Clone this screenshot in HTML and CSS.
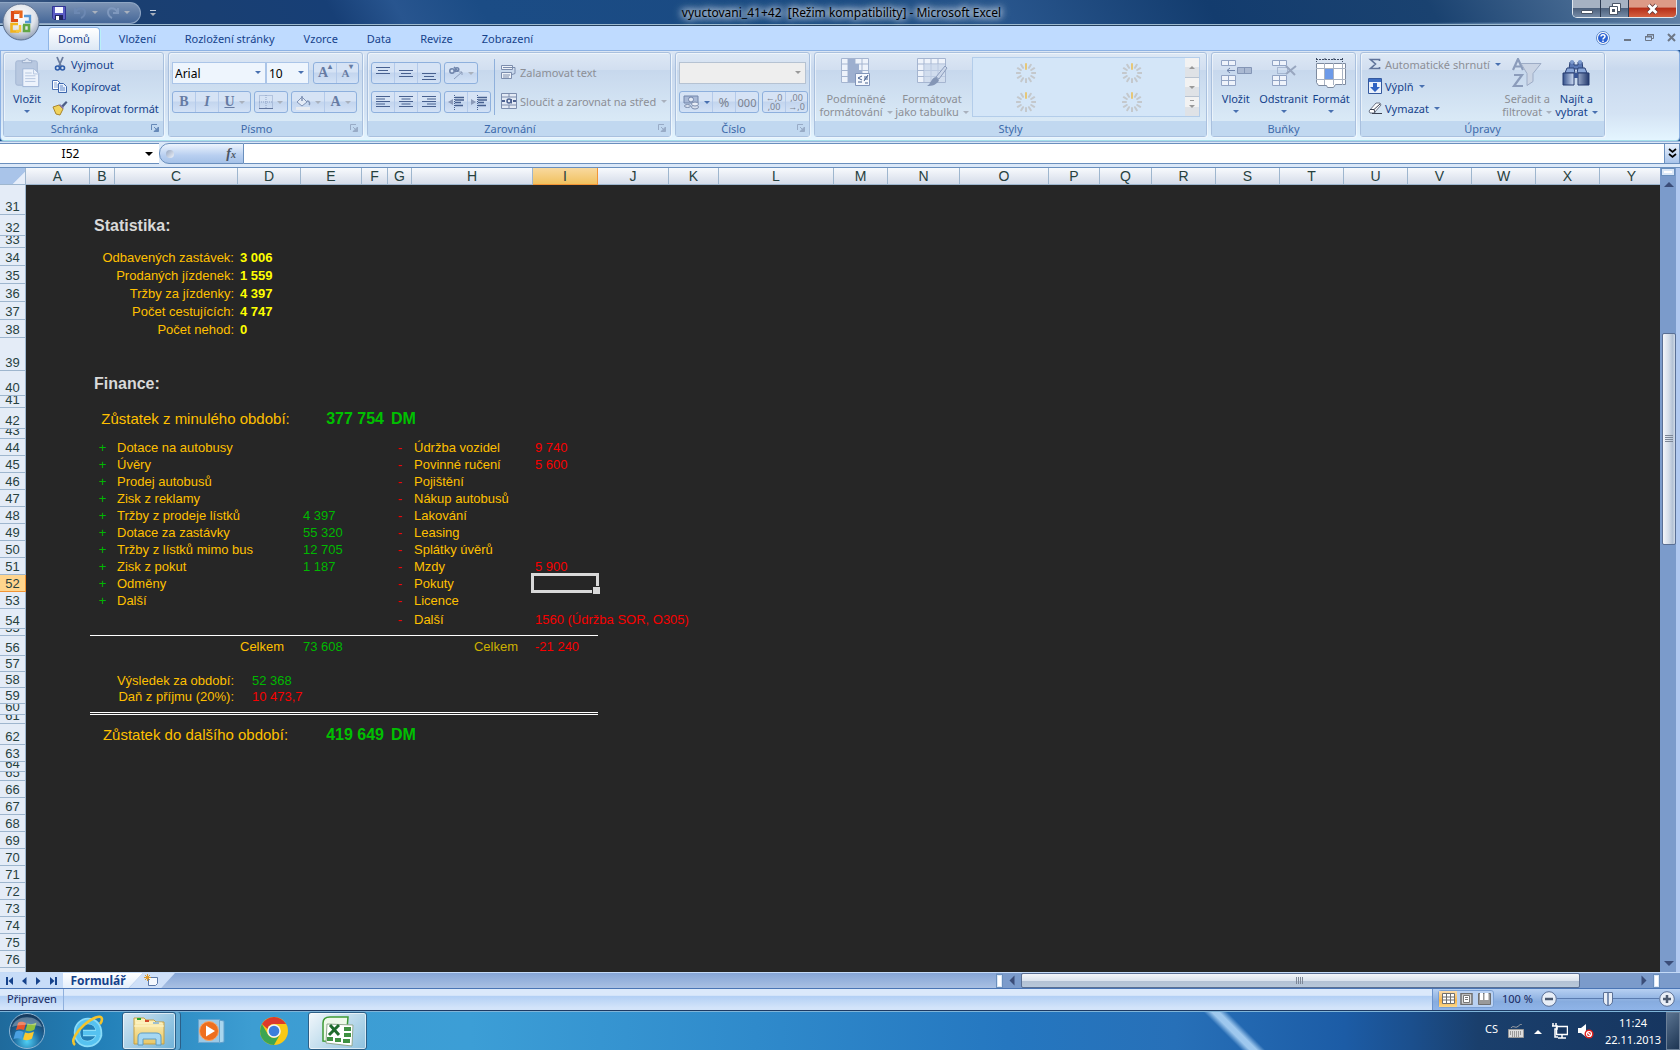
FILE: index.html
```html
<!DOCTYPE html>
<html lang="cs">

<head>
    <meta charset="UTF-8">
    <meta name="viewport" content="width=device-width, initial-scale=1.0">
    <title>vyuctovani_41+42 - Microsoft Excel</title>
    <link rel="stylesheet" href="styles.css">
</head>

<body>
    <!-- Shared icon shapes -->
    <svg class="defs" aria-hidden="true">
        <defs>
            <radialGradient id="orb" cx="50%" cy="35%" r="65%">
                <stop offset="0" stop-color="#ffffff" />
                <stop offset="0.6" stop-color="#dfe3ea" />
                <stop offset="1" stop-color="#8f9db3" />
            </radialGradient>
            <radialGradient id="startOrb" cx="50%" cy="80%" r="75%">
                <stop offset="0" stop-color="#4fd0f5" />
                <stop offset="0.5" stop-color="#1d6a9f" />
                <stop offset="1" stop-color="#173a5e" />
            </radialGradient>
            <linearGradient id="folder" x1="0" y1="0" x2="0" y2="1">
                <stop offset="0" stop-color="#fdf3c0" />
                <stop offset="1" stop-color="#e9c766" />
            </linearGradient>
            <linearGradient id="steel" x1="0" y1="0" x2="1" y2="0">
                <stop offset="0" stop-color="#34518c" />
                <stop offset="0.4" stop-color="#c9d8f0" />
                <stop offset="1" stop-color="#22386c" />
            </linearGradient>
            <symbol id="spinner" viewBox="0 0 20 20">
                <g stroke="#c4c8cc" stroke-width="2" stroke-linecap="round">
                    <path d="M13 4.8l1.8-3M15.2 7l3-1.8M16 10h3.500M15.2 13l3 1.800M13 15.200l1.800 3M10 16v3.500M7 15.200l-1.800 3M4.800 13l-3 1.800M4 10H.8M4.800 7l-3-1.800M7 4.800l-1.800-3" />
                    <path d="M10 1v5" stroke="#e6c778" />
                </g>
            </symbol>
            <symbol id="launcher" viewBox="0 0 8 8">
                <path d="M.5 6V.5H6" fill="none" stroke="currentColor" />
                <path d="M3 3l3 3M7.500 3v4.500H3z" stroke="currentColor" fill="currentColor" />
            </symbol>
        </defs>
    </svg>

    <div class="window">
        <!-- Title bar -->
        <header class="titlebar">
            <div class="quick">
                <button aria-label="Uložit">
                    <svg width="14" height="14" viewBox="0 0 14 14"><path d="M.5.5h13v13H2L.5 12z" fill="#5a5bc4" stroke="#2f3492" /><path d="M3 1h8v6H3z" fill="#f4f6ff" /><path d="M3 9h8v5H3z" fill="#20255c" /><path d="M4 10h3v4H4z" fill="#fff" /></svg>
                </button>
                <button aria-label="Zpět">
                    <svg width="13" height="13" viewBox="0 0 13 13"><path d="M1 2v5h5M1.500 6.500C4 1 11 1 11 6c0 3-2 5-4 6" fill="none" stroke="#6c88b2" stroke-width="2" /></svg>
                    <i class="arrow pale"></i>
                </button>
                <button aria-label="Znovu">
                    <svg width="13" height="13" viewBox="0 0 13 13"><path d="M12 2v5H7M11.500 6.500C9 1 2 1 2 6c0 3 2 5 4 6" fill="none" stroke="#7f98bd" stroke-width="2" /></svg>
                    <i class="arrow pale"></i>
                </button>
            </div>
            <button class="quick-more" aria-label="Přizpůsobit panel"><i class="arrow pale"></i></button>
            <h1>vyuctovani_41+42&nbsp; [Režim kompatibility] - Microsoft Excel</h1>
            <div class="win-buttons">
                <button aria-label="Minimalizovat"><svg width="12" height="12" viewBox="0 0 12 12"><path d="M.5 7.500h11v3H.5z" fill="#fff" stroke="#4a5566" /></svg></button>
                <button aria-label="Obnovit"><svg width="12" height="12" viewBox="0 0 12 12"><path d="M3.500.5h8v8h-8z" fill="#fff" stroke="#4a5566" /><path d="M.5 3.500h8v8h-8z" fill="#fff" stroke="#4a5566" /><path d="M3 6h3v3H3z" fill="#4a5566" /></svg></button>
                <button class="close" aria-label="Zavřít"><svg width="13" height="12" viewBox="0 0 13 12"><path d="M2.500 2l8 8m0-8l-8 8" stroke="#5b3030" stroke-width="4.500" /><path d="M2.500 2l8 8m0-8l-8 8" stroke="#fff" stroke-width="3" /></svg></button>
            </div>
        </header>

        <button class="office" aria-label="Tlačítko Office">
            <svg width="38" height="38" viewBox="0 0 38 38">
                <circle cx="19" cy="19" r="18" fill="url(#orb)" stroke="#5f7393" />
                <g fill="none" stroke-width="3.200">
                    <path d="M17 9.500h-6.500v8H16" stroke="#dc4a16" />
                    <path d="M12 9h7v6" stroke="#e8671c" />
                    <path d="M22 13h6v6h-5" stroke="#5698d6" stroke-width="2.400" />
                    <path d="M16 21h-6.500v7.500H17" stroke="#f2b31c" stroke-width="2.600" />
                    <path d="M18 22v6h-4" stroke="#f7c63a" stroke-width="2.400" />
                    <path d="M21 22h6v6h-5v-6" stroke="#62a644" stroke-width="2.600" />
                </g>
            </svg>
        </button>

        <!-- Ribbon tabs -->
        <nav class="tabs">
            <button class="tab active">Domů</button>
            <button class="tab">Vložení</button>
            <button class="tab">Rozložení stránky</button>
            <button class="tab">Vzorce</button>
            <button class="tab">Data</button>
            <button class="tab">Revize</button>
            <button class="tab">Zobrazení</button>
            <div class="doc-buttons">
                <button aria-label="Nápověda"><svg width="14" height="14" viewBox="0 0 14 14"><circle cx="7" cy="7" r="6.500" fill="#fff" stroke="#5b86c8" /><circle cx="7" cy="7" r="5" fill="#2c63d4" /><path d="M5 5.500c0-2.500 4-2.500 4 0C9 7 7 6.800 7 8.500M7 9.500V11" fill="none" stroke="#fff" stroke-width="1.500" /></svg></button>
                <button aria-label="Minimalizovat sešit"><svg width="9" height="9" viewBox="0 0 9 9"><path d="M1 6h7v2H1z" fill="#6d7786" /></svg></button>
                <button aria-label="Obnovit sešit"><svg width="9" height="9" viewBox="0 0 9 9"><path d="M2.500 3V1.500h6v4H7M.5 3.500h6v4h-6z" fill="none" stroke="#6d7786" /><path d="M2 1h7v1.500H2zM0 3h7v1.500H0z" fill="#6d7786" /></svg></button>
                <button aria-label="Zavřít sešit"><svg width="9" height="9" viewBox="0 0 9 9"><path d="M1 1l7 7M8 1L1 8" stroke="#6d7786" stroke-width="2" /></svg></button>
            </div>
        </nav>

        <!-- Ribbon -->
        <div class="ribbon">
            <section class="group clipboard">
                <div class="group-body">
                    <button class="big">
                        <svg width="28" height="32" viewBox="0 0 28 32"><rect x="2" y="3" width="23" height="26" rx="2" fill="#b8c8e0" stroke="#a3b5d2" /><path d="M9 5V2.500h3C12 0 16 0 16 2.500h3V5z" fill="#dce5f3" stroke="#98abc9" /><path d="M9.500 11.500h12l5 5v14h-17z" fill="#edf3fc" stroke="#9db2d4" /><path d="M21 12v5h5M12 16h7M12 19h11M12 22h11M12 25h11" fill="none" stroke="#b3c4df" /></svg>
                        <span>Vložit</span><i class="arrow"></i>
                    </button>
                    <div class="stack">
                        <button class="small"><svg width="16" height="16" viewBox="0 0 16 16"><path d="M5 1l4 9M11 1L7 10" stroke="#6a7c9e" stroke-width="1.800" /><circle cx="5.500" cy="12" r="2" fill="none" stroke="#2c5aa8" stroke-width="1.600" /><circle cx="10.500" cy="12" r="2" fill="none" stroke="#2c5aa8" stroke-width="1.600" /></svg>Vyjmout</button>
                        <button class="small"><svg width="16" height="16" viewBox="0 0 16 16"><path d="M.5 2.500h5l3 3v6h-8z" fill="#fff" stroke="#4d73b5" /><path d="M2 5h3M2 7h4M2 9h4" stroke="#7f9fd4" /><path d="M6.500 5.500h5l3 3v6h-8z" fill="#eaf2fd" stroke="#3d66ad" /><path d="M8 8h3M8 10h5M8 12h5" stroke="#5f86c8" /></svg>Kopírovat</button>
                        <button class="small"><svg width="16" height="16" viewBox="0 0 16 16"><path d="M9 6l5-5 1.500 1.500-4.500 5z" fill="#4c5e86" /><path d="M1 7l6-2 4 4-3 6-4-1z" fill="#f0d35d" stroke="#a9852c" /><path d="M7 5l4 4 1-1-4-4z" fill="#8a7bb0" /></svg>Kopírovat formát</button>
                    </div>
                </div>
                <h2>Schránka</h2><svg class="launch"><use href="#launcher" /></svg>
            </section>

            <section class="group font">
                <div class="group-body rows">
                    <div class="row">
                        <span class="combo font-name"><select aria-label="Písmo"><option>Arial</option></select></span>
                        <span class="combo font-size"><select aria-label="Velikost písma"><option>10</option></select></span>
                        <span class="set push">
                            <button class="serif wide">A<sup>▴</sup></button><button class="serif less wide">A<sup>▾</sup></button>
                        </span>
                    </div>
                    <div class="row">
                        <span class="set"><button class="serif"><b>B</b></button><button class="serif"><i>I</i></button><button class="serif wide"><u>U</u><i class="arrow pale"></i></button></span>
                        <span class="set"><button class="wide" aria-label="Ohraničení"><svg width="14" height="14" viewBox="0 0 14 14"><path d="M.5.5h13v13H.5zM7 0v14M0 7h14" fill="none" stroke="#8fa3c6" stroke-dasharray="1 1" /><path d="M0 13.500h14" stroke="#61769f" /></svg><i class="arrow pale"></i></button></span>
                        <span class="set"><button class="wide" aria-label="Barva výplně"><svg width="15" height="15" viewBox="0 0 15 15"><path d="M6 2l5 5-5 4-5-4z" fill="#e4ebf6" stroke="#8093b5" /><path d="M6 1v5M11 6c3 0 3 3 2 4" fill="none" stroke="#8093b5" stroke-width="1.500" /><path d="M0 12h14v3H0z" fill="#e7ebf1" /></svg><i class="arrow pale"></i></button><button class="serif wide">A<i class="arrow pale"></i></button></span>
                    </div>
                </div>
                <h2>Písmo</h2><svg class="launch off"><use href="#launcher" /></svg>
            </section>

            <section class="group align">
                <div class="group-body">
                    <div class="rows">
                        <div class="row">
                            <span class="set">
                                <button aria-label="Nahoru"><svg width="14" height="14" viewBox="0 0 14 14"><path d="M0 1.500h14M2 4.500h10M0 7.500h14" stroke="#47608f" /></svg></button>
                                <button aria-label="Na střed svisle"><svg width="14" height="14" viewBox="0 0 14 14"><path d="M0 4.500h14M2 7.500h10M0 10.500h14" stroke="#47608f" /></svg></button>
                                <button aria-label="Dolů"><svg width="14" height="14" viewBox="0 0 14 14"><path d="M0 7.500h14M2 10.500h10M0 13.500h14" stroke="#47608f" /></svg></button>
                            </span>
                            <span class="set"><button class="wide" aria-label="Orientace"><svg width="16" height="14" viewBox="0 0 16 14"><circle cx="4" cy="5" r="2.200" fill="none" stroke="#6f84ab" stroke-width="1.500" /><path d="M6 4l2 2M6 1l4 4" stroke="#6f84ab" stroke-width="1.500" /><circle cx="9" cy="3.500" r="1.800" fill="none" stroke="#6f84ab" stroke-width="1.500" /><path d="M6 13l8-7M11 6h3v3" fill="none" stroke="#8c9cba" /></svg><i class="arrow pale"></i></button></span>
                        </div>
                        <div class="row">
                            <span class="set">
                                <button aria-label="Vlevo"><svg width="14" height="12" viewBox="0 0 14 12"><path d="M0 .5h14M0 3h9M0 5.500h14M0 8h9M0 10.500h14" stroke="#47608f" /></svg></button>
                                <button aria-label="Na střed"><svg width="14" height="12" viewBox="0 0 14 12"><path d="M0 .5h14M2.500 3h9M0 5.500h14M2.500 8h9M0 10.500h14" stroke="#47608f" /></svg></button>
                                <button aria-label="Vpravo"><svg width="14" height="12" viewBox="0 0 14 12"><path d="M0 .5h14M5 3h9M0 5.500h14M5 8h9M0 10.500h14" stroke="#47608f" /></svg></button>
                            </span>
                            <span class="set">
                                <button aria-label="Zmenšit odsazení"><svg width="16" height="15" viewBox="0 0 16 15"><path d="M7 2.500h9M7 5h9M7 7.500h6M7 10.500h8" stroke="#47608f" stroke-width="1.500" /><path d="M6.500 0v15" stroke="#47608f" stroke-dasharray="1 1" /><path d="M5 4v6L0 7z" fill="#8b9ab8" /></svg></button>
                                <button aria-label="Zvětšit odsazení"><svg width="16" height="15" viewBox="0 0 16 15"><path d="M7 2.500h9M7 5h9M7 7.500h6M7 10.500h8" stroke="#47608f" stroke-width="1.500" /><path d="M6.500 0v15" stroke="#47608f" stroke-dasharray="1 1" /><path d="M0 4v6l5-3z" fill="#8b9ab8" /></svg></button>
                            </span>
                        </div>
                    </div>
                    <div class="rows text-rows">
                        <button class="small off"><svg width="16" height="16" viewBox="0 0 16 16"><path d="M.5 1.500h11v4H.5zM.5 8.500h10v6H.5z" fill="#eef2f8" stroke="#7c8dad" /><path d="M2 3.500h12v6l-3 1M2 11h7M2 13h6" fill="none" stroke="#7c8dad" /></svg>Zalamovat text</button>
                        <button class="small off"><svg width="16" height="16" viewBox="0 0 16 16"><path d="M.5.5h15v15H.5zM.5 4h15M.5 12h15M8 0v4M8 12v4" fill="#e3eaf5" stroke="#7c8dad" /><path d="M1 8h3M12 8h3" stroke="#4d6290" stroke-width="2" /><circle cx="8" cy="8" r="2" fill="none" stroke="#4d6290" stroke-width="1.500" /><path d="M10.500 6v4.500" stroke="#4d6290" /></svg>Sloučit a zarovnat na střed<i class="arrow pale"></i></button>
                    </div>
                </div>
                <h2>Zarovnání</h2><svg class="launch off"><use href="#launcher" /></svg>
            </section>

            <section class="group number">
                <div class="group-body rows">
                    <div class="row"><span class="combo disabled"><select aria-label="Formát čísla" disabled><option></option></select></span></div>
                    <div class="row">
                        <span class="set grow"><button class="wide" aria-label="Měna"><svg width="17" height="15" viewBox="0 0 17 15"><path d="M1 1h14v7H1z" fill="#a9b9d6" stroke="#7386ab" /><circle cx="8" cy="4.500" r="2.500" fill="#e2e9f5" stroke="#7386ab" /><ellipse cx="12" cy="12" rx="3.500" ry="2" fill="#d8e0ee" stroke="#7c8dad" /><ellipse cx="12" cy="9" rx="3.500" ry="2" fill="#e9eef7" stroke="#7c8dad" /><ellipse cx="4.500" cy="11" rx="3" ry="1.500" fill="#d8e0ee" stroke="#7c8dad" /></svg><i class="arrow"></i></button><button class="percent">%</button><button>000</button></span>
                        <span class="set">
                            <button class="decimals"><span>←,0</span><span>,00</span></button><button class="decimals"><span>,00</span><span>→,0</span></button>
                        </span>
                    </div>
                </div>
                <h2>Číslo</h2><svg class="launch off"><use href="#launcher" /></svg>
            </section>

            <section class="group styles">
                <div class="group-body">
                    <button class="big off">
                        <svg width="32" height="30" viewBox="0 0 32 30"><path d="M1.500.5h27v24h-27zM1.500 6h27M1.500 12.500h27M1.500 18.500h27M8 0v25M15 0v25M22 0v25" fill="#eef3fb" stroke="#a5b5d0" /><path d="M8 1h7v5h-7zM8 6h11v6H8zM8 12h14v6H8zM8 18h7v6H8z" fill="#9dafcf" /><path d="M15.500 15.500h14v12h-14z" fill="#f5f8fd" stroke="#8195ba" /><path d="M22 18l-4 2 4 2M18 24h4M24 19h4M24 21h4M28 17l-4 6M25 25h3" fill="none" stroke="#47608f" /></svg>
                        <span>Podmíněné<br>formátování<i class="arrow pale"></i></span>
                    </button>
                    <button class="big off">
                        <svg width="32" height="30" viewBox="0 0 32 30"><path d="M1.500.5h28v24h-28zM1.500 6h28M1.500 12.500h28M1.500 18.500h28M8 0v25M15 0v25M22 0v25" fill="#eef3fb" stroke="#a5b5d0" /><path d="M8 6h21v18H8z" fill="#c5d3e8" opacity=".7" /><path d="M29 8l2 2-8 11-3-2z" fill="#cbd7ea" stroke="#8c9dbd" /><path d="M20 19l3 3c-2 5-7 6-12 6 4-2 4-8 9-9z" fill="#8496b6" /></svg>
                        <span>Formátovat<br>jako tabulku<i class="arrow pale"></i></span>
                    </button>
                    <div class="gallery">
                        <div class="gallery-items">
                            <svg><use href="#spinner" /></svg><svg><use href="#spinner" /></svg>
                            <svg><use href="#spinner" /></svg><svg><use href="#spinner" /></svg>
                        </div>
                        <div class="gallery-scroll">
                            <button aria-label="Předchozí"><i class="arrow up grey"></i></button>
                            <button aria-label="Další styly"><i class="arrow grey"></i></button>
                            <button class="more" aria-label="Více"><i class="arrow grey"></i></button>
                        </div>
                    </div>
                </div>
                <h2>Styly</h2>
            </section>

            <section class="group cells">
                <div class="group-body">
                    <button class="big"><svg width="32" height="28" viewBox="0 0 32 28"><path d="M1.500 1.500h14v5h-14zM8.500 1.500v5M1.500 16.500h14v10h-14zM8.500 16.500v10M1.500 21.500h14" fill="#eef3fb" stroke="#92a4c4" /><path d="M17.500 8.500h14v6h-14zM24.500 8.500v6" fill="#aab9d2" stroke="#8496b6" /><path d="M15 11.500H7M10 9l-3 2.500 3 2.500" fill="none" stroke="#6f84ab" /></svg><span>Vložit</span><i class="arrow"></i></button>
                    <button class="big"><svg width="32" height="28" viewBox="0 0 32 28"><path d="M4.500 1.500h14v5h-14zM11.500 1.500v5M4.500 16.500h14v10h-14zM11.500 16.500v10M4.500 21.500h14" fill="#eef3fb" stroke="#92a4c4" /><path d="M9.500 8.500h10v6h-10z" fill="none" stroke="#8093b5" stroke-dasharray="1 1" /><path d="M18 7l9 9M28 7l-10 8" stroke="#98a6bf" stroke-width="2" /></svg><span>Odstranit</span><i class="arrow"></i></button>
                    <button class="big"><svg width="32" height="30" viewBox="0 0 32 30"><path d="M1.500 0v4M27.500 0v4M10 0v3M19 0v3M1 1.500h27" stroke="#3d4a62" stroke-dasharray="2 1" fill="none" /><path d="M1.500 5.500h29v21h-10l-2 3h-6l-1-2H3.500l-2-3z" fill="#fff" stroke="#7d8a9f" /><path d="M1 10.500h30M1 21.500h30M9.500 5v22M18.500 5v22M27.500 5v22" stroke="#a8b2c2" /><path d="M10 11h8v10h-8z" fill="#6d9ae8" /></svg><span>Formát</span><i class="arrow"></i></button>
                </div>
                <h2>Buňky</h2>
            </section>

            <section class="group editing">
                <div class="group-body">
                    <div class="stack">
                        <button class="small off"><svg width="14" height="16" viewBox="0 0 14 16"><path d="M11.500 5V3.500h-9l5 4.500-5 4.500h9V11" fill="none" stroke="#5f739a" stroke-width="1.600" /></svg>Automatické shrnutí<i class="arrow"></i></button>
                        <button class="small"><svg width="14" height="16" viewBox="0 0 14 16"><path d="M.5.5h13v15H.5z" fill="#eaf1fc" stroke="#34599e" /><path d="M1 1h12v3H1z" fill="#3f6fc4" /><path d="M5 5h4v4h3l-5 5-5-5h3z" fill="#2f62c2" /></svg>Výplň<i class="arrow"></i></button>
                        <button class="small"><svg width="14" height="16" viewBox="0 0 14 16"><path d="M1 11l7-8h4l1 2-7 8H2z" fill="#fff" stroke="#6c7486" /><path d="M2 9.500h4l1 3M6 9.500L12 4M4 13.500h10" fill="none" stroke="#394050" /></svg>Vymazat<i class="arrow"></i></button>
                    </div>
                    <button class="big off">
                        <svg width="32" height="30" viewBox="0 0 32 30"><path d="M2 12L7 1l5 11M4 8.500h6M3 17h8L3 28h9" fill="none" stroke="#8b9cbb" stroke-width="2.200" /><path d="M10 5.500h20l-8 10v8l-6 4v-12z" fill="#cad4e4" stroke="#9dacc6" /></svg>
                        <span>Seřadit a<br>filtrovat<i class="arrow pale"></i></span>
                    </button>
                    <button class="big">
                        <svg width="28" height="28" viewBox="0 0 28 28"><path d="M8 3h4v3h4V3h4l1 7H7z" fill="#5a78b4" stroke="#2b4276" /><path d="M5 9h7l1 5H3zM16 9h7l2 5H15z" fill="#89a6d8" stroke="#2b4276" /><path d="M1 14h11v12H1zM16 14h11v12H16z" fill="url(#steel)" stroke="#263c70" /><path d="M12 14h4v5h-4z" fill="#3a5694" /><circle cx="10" cy="3" r="2" fill="#7d9acd" /><circle cx="18" cy="3" r="2" fill="#7d9acd" /></svg>
                        <span>Najít a<br>vybrat<i class="arrow"></i></span>
                    </button>
                </div>
                <h2>Úpravy</h2>
            </section>
        </div>

        <!-- Formula bar -->
        <div class="formula-bar">
            <div class="name-box"><input type="text" value="I52" aria-label="Pole názvů"><i class="arrow black"></i></div>
            <div class="fx"><i class="dot"></i><button aria-label="Vložit funkci"><em>f<sub>x</sub></em></button></div>
            <input class="formula" type="text" aria-label="Řádek vzorců">
            <button class="expand" aria-label="Rozbalit"><svg width="9" height="11" viewBox="0 0 9 11"><path d="M1 1l3.500 3L8 1M1 6l3.500 3L8 6" fill="none" stroke="#000" stroke-width="1.700" /></svg></button>
        </div>

        <!-- Sheet -->
        <main class="sheet">
            <div class="viewport">
                <table id="grid"></table>
            </div>
            <div class="vscroll">
                <i class="split"></i>
                <div class="vtrack">
                    <i class="arrow up navy"></i>
                    <div class="vthumb"><i class="grip"></i></div>
                    <i class="arrow navy"></i>
                </div>
            </div>
        </main>

        <!-- Sheet tabs -->
        <div class="sheet-bar">
            <div class="sheet-nav">
                <button aria-label="První list"><svg width="7" height="8" viewBox="0 0 7 8"><path d="M0 0h2v8H0zM7 0v8L2.500 4z" fill="#16428b" /></svg></button>
                <button aria-label="Předchozí list"><svg width="7" height="8" viewBox="0 0 7 8"><path d="M5.500 0v8L1 4z" fill="#16428b" /></svg></button>
                <button aria-label="Následující list"><svg width="7" height="8" viewBox="0 0 7 8"><path d="M1 0v8l4.500-4z" fill="#16428b" /></svg></button>
                <button aria-label="Poslední list"><svg width="7" height="8" viewBox="0 0 7 8"><path d="M5 0h2v8H5zM0 0v8l4.500-4z" fill="#16428b" /></svg></button>
            </div>
            <button class="sheet-tab">Formulář</button>
            <button class="new-sheet" aria-label="Vložit list"><svg width="14" height="13" viewBox="0 0 14 13"><path d="M4.500 3.500h9v6l-2 2h-7z" fill="#f3f7fd" stroke="#5c79a8" /><path d="M3.500 0v7M0 3.500h7M1 1l5 5M6 1L1 6" stroke="#dc9a2c" /></svg></button>
            <div class="hscroll">
                <i class="hsplit"></i>
                <i class="arrow left navy"></i>
                <div class="htrack"><div class="hthumb"><i class="grip side"></i></div></div>
                <i class="arrow right navy"></i>
                <i class="hsplit"></i>
            </div>
        </div>

        <!-- Status bar -->
        <footer class="status">
            <span class="ready">Připraven</span>
            <div class="status-right">
                <div class="views">
                    <button class="on" aria-label="Normálně"><svg width="13" height="11" viewBox="0 0 13 11"><path d="M.5.5h12v10H.5zM0 4h13M0 7h13M4.500 0v11M8.500 0v11" fill="#fff" stroke="#6f6f6f" /></svg></button>
                    <button aria-label="Rozložení stránky"><svg width="13" height="12" viewBox="0 0 13 12"><path d="M1 .5h11v11H1z" fill="#d5d5d5" stroke="#6f6f6f" stroke-width="1.500" /><path d="M3.500 2.500h6v7h-6zM5 4.500h3M5 6.500h3" fill="#fff" stroke="#777" /></svg></button>
                    <button aria-label="Konce stránek"><svg width="13" height="12" viewBox="0 0 13 12"><path d="M.5.5h12v11H.5z" fill="#999" stroke="#6f6f6f" /><path d="M2 0h3v7H2zM6.500 0h4v7h-4z" fill="#fff" /></svg></button>
                </div>
                <label for="zoom">100 %</label>
                <button class="round" aria-label="Oddálit"><svg width="16" height="16" viewBox="0 0 16 16"><circle cx="8" cy="8" r="7.300" fill="#e8eef7" stroke="#5b7096" /><path d="M4 8h8" stroke="#4c5a70" stroke-width="2.500" /></svg></button>
                <input id="zoom" type="range" min="0" max="100" value="50">
                <button class="round" aria-label="Přiblížit"><svg width="16" height="16" viewBox="0 0 16 16"><circle cx="8" cy="8" r="7.300" fill="#e8eef7" stroke="#5b7096" /><path d="M4 8h8M8 4v8" stroke="#4c5a70" stroke-width="2.500" /></svg></button>
            </div>
        </footer>
    </div>

    <!-- Windows taskbar -->
    <div class="taskbar">
        <button class="task start" aria-label="Start"><svg width="38" height="38" viewBox="0 0 38 38"><circle cx="19" cy="19" r="17.500" fill="url(#startOrb)" stroke="#8fb6d4" /><path d="M10 11c3-2 5-1 8 0l-2 7c-3-1-5-1-8 0z" fill="#e8552c" /><path d="M19.500 11.500c3 1 5 1 9-1l-2 7c-3 2-6 2-9 1z" fill="#8fc13e" /><path d="M7.500 20c3-2 5-1 8 0l-2 7c-3-1-5-1-8 0z" fill="#4aa0e2" /><path d="M17 20.500c3 1 5 1 9-1l-2 7c-3 2-6 2-9 1z" fill="#fbc92f" /><path d="M4 15C8 2 30 2 34 15c-8-3-22-3-30 0z" fill="#fff" opacity=".3" /></svg></button>
        <button class="task" aria-label="Internet Explorer"><svg width="34" height="34" viewBox="0 0 34 34"><path d="M28 21c-1 5-6 9-11.500 9C10 30 6 25 6 18.500 6 12 11 7 17 7c7 0 11 5 11 12H12" fill="none" stroke="#8adcf8" stroke-width="6.500" /><path d="M27.500 21c-1 5-5.500 8.500-11 8.500-6 0-10-4.500-10-11C6.500 12 11 7.500 17 7.500c6.500 0 10.500 5 10.500 11.500H12" fill="none" stroke="#56c2f0" stroke-width="4" /><path d="M4 31c-5-4 2-14 9-20C21 4 30 0 31 5c0 2-1 4-2 5" fill="none" stroke="#f4c42c" stroke-width="2.600" /></svg></button>
        <button class="task open stacked" aria-label="Průzkumník"><svg width="34" height="32" viewBox="0 0 34 32"><path d="M2 5V3h10l2 2h8l2 2h8v22H2z" fill="url(#folder)" stroke="#c59f42" /><path d="M5 3h4v2H5z" fill="#28a428" /><path d="M13 5h4v2h-4z" fill="#d24a2a" /><path d="M21 7h6v2h-6z" fill="#3f8ad2" /><path d="M2 11h30M4 8h26" stroke="#fff6cc" /><path d="M6 30V22c0-3 2-4 4-4h14c3 0 5 1 5 4v8h-5v-6H11v6z" fill="#a5d7f2" stroke="#5c9cc4" /></svg></button>
        <button class="task" aria-label="Media Player"><svg width="30" height="28" viewBox="0 0 30 28"><path d="M22 3l5 1v21l-5 1z" fill="#a9d6ee" stroke="#5fa0cc" /><path d="M1.500 2.500h21v23h-21z" fill="#9cc9e6" stroke="#6aa6cf" /><circle cx="12" cy="14" r="9.500" fill="#ee6f1e" stroke="#f7a567" /><path d="M9 8.500v11l9-5.500z" fill="#fff" /></svg></button>
        <button class="task" aria-label="Chrome"><svg width="30" height="30" viewBox="0 0 30 30"><circle cx="15" cy="15" r="14" fill="#f9c916" /><path d="M2.900 8A14 14 0 0 1 27.100 8H15a7 7 0 0 0-6.500 5z" fill="#dc3a2b" /><path d="M2.900 8A14 14 0 0 0 15 29l6-10.500a7 7 0 0 1-12 0z" fill="#3ca552" /><circle cx="15" cy="15" r="6.800" fill="#f5f5f5" /><circle cx="15" cy="15" r="5.300" fill="#3b7ddb" /></svg></button>
        <button class="task open excel" aria-label="Excel"><svg width="32" height="31" viewBox="0 0 32 31"><path d="M1 7q0-6 7-6h18l-2 25-23-1z" fill="#eef8ea" stroke="#3e9a35" stroke-width="1.500" /><path d="M5 8l26 1-1 21-26-3z" fill="#fff" stroke="#91a98f" /><path d="M22 11h7v4h-7zM22 17h7v4h-7zM21 23h7v4h-7zM13 22h6v4h-6zM5 21h6v4H5z" fill="#3f9142" /><path d="M8 9l9 10M17 9L7 19" stroke="#1f6b2c" stroke-width="3" /></svg></button>
        <div class="tray">
            <div class="tray-icons">
                <span class="lang">CS</span>
                <svg width="16" height="14" viewBox="0 0 16 14"><path d="M.5 5.500h15v8H.5z" fill="#ddd" stroke="#999" /><path d="M2 8h12M2 10h12M4 12h8" stroke="#555" stroke-dasharray="1 1" /><path d="M3 4c2-3 4 0 6-1s3-3 5-3" fill="none" stroke="#aaa" /></svg>
                <svg width="8" height="5" viewBox="0 0 8 5"><path d="M0 5l4-4 4 4z" fill="#fff" /></svg>
                <svg width="16" height="16" viewBox="0 0 16 16"><path d="M4.500 3.500h11v8h-11z" fill="#17365f" stroke="#fff" stroke-width="1.500" /><path d="M6 15h8M10 12v3M0 3h5v3H3v8h3M1 0v3M4 0v3" fill="none" stroke="#fff" stroke-width="1.500" /></svg>
                <svg width="16" height="16" viewBox="0 0 16 16"><path d="M0 5h3l5-4v13l-5-4H0z" fill="#fff" /><circle cx="11" cy="11" r="4.500" fill="#e2201c" /><circle cx="11" cy="11" r="2.500" fill="none" stroke="#fff" stroke-width="1.200" /><path d="M9 9l4 4" stroke="#fff" stroke-width="1.200" /></svg>
            </div>
            <div class="clock"><span>11:24</span><span>22.11.2013</span></div>
            <button class="desktop" aria-label="Zobrazit plochu"></button>
        </div>
    </div>

    <script src="script.js"></script>
</body>

</html>
```

FILE: styles.css
```css
/* Global Styles */
* {
    box-sizing: border-box;
}

body {
    margin: 0;
    height: 100vh;
    display: flex;
    flex-direction: column;
    overflow: hidden;
    background-color: #1c4f8c;
    font-family: "Noto Sans", "Open Sans", sans-serif;
    font-size: 11px;
    color: #15428b;
}

button,
input,
select {
    margin: 0;
    padding: 0;
    border: none;
    background: none;
    font: inherit;
    color: inherit;
}

h1,
h2 {
    margin: 0;
    font-weight: normal;
}

.defs {
    position: absolute;
    width: 0;
    height: 0;
}

.window {
    flex: 1;
    min-height: 0;
    display: flex;
    flex-direction: column;
    position: relative;
}

/* Little triangles */
.arrow {
    display: inline-block;
    flex: none;
    border: 3px solid transparent;
    border-top-color: #4870b0;
    border-bottom-width: 0;
}

.arrow.pale {
    border-top-color: #a9b1bd;
}

.arrow.grey {
    border-top-color: #999;
}

.arrow.black {
    border-width: 4px 4px 0;
    border-top-color: #000;
}

.arrow.navy {
    border-width: 5px 5px 0;
    border-top-color: #3b4d78;
}

.arrow.up {
    transform: rotate(180deg);
}

.arrow.left {
    transform: rotate(90deg);
}

.arrow.right {
    transform: rotate(-90deg);
}

/* Title bar */
.titlebar {
    height: 26px;
    display: grid;
    grid-template-columns: auto 1fr auto 1fr;
    align-items: center;
    background: radial-gradient(ellipse at 92% 100%, rgba(160, 195, 225, 0.8), transparent 9%), linear-gradient(60deg, #4b658c 0, #1b3f70 6%, #173f76 20%, #28558f 24%, #1b4c85 29%, #1a4a82 50%, #28558c 60%, #133c6e 72%, #1a4270 85%, #6383a8 100%);
    border-bottom: 1px solid #24405f;
    box-shadow: inset 0 -1px #9dbad0;
}

.quick {
    height: 22px;
    width: 141px;
    padding-left: 52px;
    display: flex;
    align-items: center;
    gap: 8px;
    background: linear-gradient(#7c93b4, #456798);
    border: 1px solid #8fa6c4;
    border-left: none;
    border-radius: 0 12px 12px 0;
}

.quick button {
    display: flex;
    align-items: center;
    gap: 5px;
}

.quick-more {
    justify-self: start;
    margin-left: 9px;
    display: flex;
    border-top: 1px solid #c3cfdf;
    padding-top: 2px;
}

.titlebar h1 {
    padding: 0 8px;
    margin-right: 138px;
    font-size: 12px;
    line-height: 18px;
    color: #000;
    white-space: nowrap;
    text-shadow: 0 0 6px #fff, 0 0 8px #fff, 0 0 12px #cde;
}

.win-buttons {
    justify-self: end;
    align-self: start;
    display: flex;
    height: 18px;
    margin-right: 3px;
    border: 1px solid #e0e8f0;
    border-top: none;
    border-radius: 0 0 5px 5px;
    overflow: hidden;
}

.win-buttons button {
    width: 28px;
    display: flex;
    align-items: center;
    justify-content: center;
    background: linear-gradient(#a6b2c3 45%, #4d617d 50%, #768ba6);
    border-right: 1px solid #2b3950;
}

.win-buttons .close {
    width: 47px;
    background: linear-gradient(#dd9a87 40%, #b7301a 50%, #d4603f);
    border-right: none;
}

.office {
    position: absolute;
    left: 2px;
    top: 3px;
    z-index: 2;
    height: 38px;
    border-radius: 50%;
}

/* Ribbon tabs */
.tabs {
    height: 24px;
    padding: 1px 4px 0 48px;
    display: flex;
    gap: 9px;
    background-color: #bfdbff;
}

.tab {
    height: 23px;
    padding: 0 9px 2px;
    border: 1px solid transparent;
    border-bottom: none;
    border-radius: 4px 4px 0 0;
}

.tab.active {
    background: linear-gradient(#fff, #dde8f5);
    border-color: #8fb5e6;
    box-shadow: 1px 0 #b9f0f8;
}

.doc-buttons {
    margin-left: auto;
    padding-bottom: 2px;
    display: flex;
    align-items: center;
    gap: 13px;
}

.doc-buttons button {
    display: flex;
}

/* Ribbon */
.ribbon {
    height: 91px;
    padding: 1px 2px 4px;
    display: flex;
    gap: 4px;
    background: linear-gradient(#dbe6f4, #c9d9ee 20%, #d4e3f4 70%, #e4f5ff);
    border: 1px solid #8db2e3;
    border-bottom-color: #a5dfe9;
    border-radius: 0 4px 4px 4px;
}

.group {
    position: relative;
    height: 85px;
    display: flex;
    flex-direction: column;
    flex: none;
    border: 1px solid #a9c0de;
    border-radius: 3px;
    background: linear-gradient(#dde8f5, #d2dff0 20%, #c7d8ed 21%, #d9e9f6 80%);
    box-shadow: inset 1px 1px rgba(255, 255, 255, 0.5), 1px 1px #eef6fd;
}

.group h2 {
    height: 15px;
    font-size: 11px;
    line-height: 15px;
    text-align: center;
    color: #3e6aaa;
    background-color: #c1d8f0;
}

/* groups with a dialog launcher in the corner */
.clipboard h2,
.font h2,
.align h2,
.number h2 {
    padding-right: 18px;
}

.group-body {
    flex: 1;
    min-height: 0;
    padding: 0 3px;
    display: flex;
}

.clipboard { width: 161px; }
.font { width: 195px; }
.align { width: 304px; }
.number { width: 135px; }
.styles { width: 393px; }
.cells { width: 145px; }
.editing { width: 245px; }

.clipboard .group-body,
.cells .group-body {
    padding: 0;
}

.launch {
    position: absolute;
    right: 4px;
    bottom: 4px;
    width: 8px;
    height: 8px;
    color: #6689b8;
}

.launch.off {
    color: #98abc6;
}

.big {
    min-width: 46px;
    padding-top: 5px;
    display: flex;
    flex-direction: column;
    align-items: center;
    line-height: 13px;
    white-space: nowrap;
}

.big svg {
    height: 30px;
    margin-bottom: 4px;
}

.big > .arrow {
    margin-top: 5px;
}

.big span .arrow {
    margin: 0 0 2px 4px;
}

.off {
    color: #8c8f96;
}

.stack {
    padding-left: 2px;
    display: flex;
    flex-direction: column;
}

.small {
    height: 22px;
    display: flex;
    align-items: center;
    gap: 3px;
    white-space: nowrap;
}

.small .arrow {
    margin-left: 2px;
}

.rows {
    display: flex;
    flex-direction: column;
    gap: 7px;
    padding-top: 9px;
}

.row {
    display: flex;
    gap: 3px;
}

.set {
    height: 22px;
    display: flex;
    border: 1px solid #8eb0dd;
    border-radius: 3px;
    background: linear-gradient(#d6e3f5 45%, #c3d5ee 50%, #d3e2f6);
}

.set button {
    width: 23px;
    display: flex;
    align-items: center;
    justify-content: center;
    color: #7a8290;
    border-left: 1px solid #b4caea;
}

.set button:first-child {
    border-left: none;
    width: 22px;
}

.set .wide,
.set .wide:first-child {
    width: 32px;
    gap: 4px;
}

.set .serif {
    font-family: "Liberation Serif", serif;
    font-size: 14px;
    font-weight: bold;
    color: #667ba3;
}

.push .wide,
.push .wide:first-child {
    width: 22px;
    gap: 0;
}

.set .less {
    font-size: 11px;
}

.set sup {
    font-size: 8px;
    line-height: 8px;
    align-self: flex-start;
}

.push {
    margin-left: 1px;
}

.percent {
    font-size: 13px;
}

.set .decimals {
    flex-direction: column;
    font-size: 9px;
    line-height: 9px;
    width: 22px;
}

.grow {
    flex: 1;
}

.grow button:last-child {
    flex: 1;
}

/* Drop-down boxes */
.combo {
    position: relative;
    height: 22px;
    flex: 1;
    background-color: #eef5fd;
    border: 1px solid #abc5e8;
}

.combo select {
    width: 100%;
    height: 20px;
    padding-left: 2px;
    appearance: none;
    font-size: 12px;
    color: #000;
}

.combo::after {
    content: "";
    position: absolute;
    right: 4px;
    top: 8px;
    border: 3px solid transparent;
    border-top-color: #4870b0;
    border-bottom-width: 0;
    pointer-events: none;
}

.combo.font-size {
    flex: 0 0 43px;
    margin-left: -3px;
}

.combo.disabled {
    background-color: #eee;
    border-color: #b5c2d2;
}

.combo.disabled::after {
    border-top-color: #999;
}

.text-rows {
    flex: 1;
    margin: 6px 0 6px 3px;
    padding: 2px 0 0 6px;
    border-left: 1px solid #8fb0db;
}

/* Style gallery */
.styles .big {
    width: 76px;
}

.gallery {
    flex: 1;
    margin: 4px 3px 4px 2px;
    display: flex;
    border: 1px solid #b3cdea;
    background-color: #d4e6f8;
}

.gallery-items {
    flex: 1;
    display: grid;
    grid-template-columns: 1fr 1fr;
    place-items: center;
}

.gallery-items svg {
    width: 20px;
    height: 20px;
}

.gallery-scroll {
    width: 14px;
    display: flex;
    flex-direction: column;
    gap: 1px;
    background-color: #b9c3d0;
}

.gallery-scroll button {
    flex: 1;
    display: flex;
    align-items: center;
    justify-content: center;
    background: linear-gradient(#f2f2f2 50%, #dfe2e6 50%);
}

.gallery-scroll .more .arrow {
    box-shadow: 0 -6px 0 -1px #999;
}

.cells .big {
    width: 48px;
}

.editing .stack {
    width: 141px;
    padding-left: 4px;
}

.editing .big {
    width: 50px;
}

/* Formula bar */
.formula-bar {
    height: 26px;
    padding: 1px 0 4px;
    display: flex;
    background-color: #dbe8f8;
    border-top: 1px solid #9ab6dc;
    color: #000;
}

.formula-bar > * {
    height: 21px;
    border-top: 1px solid #6a8fbd;
    border-bottom: 1px solid #6a8fbd;
}

.name-box {
    width: 159px;
    padding-right: 6px;
    display: flex;
    align-items: center;
    background-color: #fff;
}

.name-box input {
    flex: 1;
    min-width: 0;
    padding-right: 4px;
    font-size: 12px;
    text-align: center;
}

.fx {
    width: 85px;
    padding: 0 7px 0 6px;
    display: flex;
    align-items: center;
    justify-content: space-between;
    background: linear-gradient(#edf4fd, #b8cff0 60%, #a6c2e8);
    border-left: 1px solid #6a8fbd;
    border-right: 1px solid #6a8fbd;
    border-radius: 10px 0 0 10px;
}

.dot {
    width: 8px;
    height: 8px;
    border-radius: 50%;
    background: linear-gradient(135deg, #95a5c0, #f0f4fa);
}

.fx em {
    font-family: "Liberation Serif", serif;
    font-size: 14px;
    font-weight: bold;
    line-height: 16px;
    color: #4c5564;
}

.fx sub {
    font-size: 10px;
    line-height: 0;
    vertical-align: baseline;
}

.formula {
    flex: 1;
    min-width: 0;
    background-color: #fff;
}

.expand {
    width: 16px;
    display: flex;
    align-items: center;
    justify-content: center;
    background: linear-gradient(#e9f1fc, #a9c4ea);
    border: 1px solid #6a8fbd;
}

/* Sheet */
.sheet {
    flex: 1;
    min-height: 0;
    display: flex;
    border-top: 1px solid #6a8fbd;
}

.viewport {
    flex: 1;
    min-width: 0;
    overflow: hidden;
    background-color: #262626;
}

#grid {
    width: 1664px;
    table-layout: fixed;
    border-collapse: separate;
    border-spacing: 0;
    font-family: "Liberation Sans", Arial, sans-serif;
    font-size: 13px;
    line-height: 15px;
    color: #ffc000;
}

#grid th,
#grid td {
    padding: 0;
    font-weight: normal;
    white-space: nowrap;
    position: relative;
}

#grid thead th {
    height: 17px;
    font-size: 14px;
    line-height: 16px;
    color: #27413e;
    background: linear-gradient(#f8fafd, #d5dce9);
    border-right: 1px solid #9eb6ce;
    border-bottom: 1px solid #9eb6ce;
}

#grid thead .corner {
    background: linear-gradient(135deg, #a9c4e9 70%, #e6eefa 71%);
}

#grid thead .current {
    background: linear-gradient(#f9d99f, #f1c15f);
    border-color: #f29536;
}

.cell {
    display: flex;
    align-items: center;
    padding: 0 2px;
}

.row-no .cell {
    align-items: flex-end;
    justify-content: center;
    padding: 0;
    overflow: hidden;
    color: #27413e;
    background-color: #e4ecf7;
    border-right: 1px solid #9eb6ce;
    border-bottom: 1px solid #9eb6ce;
}

.row-no.current .cell {
    background-color: #ffd58d;
    border-color: #f29536;
}

.title {
    font-size: 16px;
    line-height: 18px;
    font-weight: bold;
    color: #d9d9d9;
    padding-left: 4px;
}

.balance {
    font-size: 15px;
    line-height: 18px;
    justify-content: center;
}

.total {
    padding-left: 3px;
    font-size: 16px;
    line-height: 18px;
    font-weight: bold;
    color: #00c000;
}

.end {
    justify-content: flex-end;
    padding-right: 4px;
}

.sum {
    justify-content: flex-end;
    padding-right: 15px;
    color: #ccb000;
}

.mid {
    justify-content: center;
}

.indent {
    padding-left: 14px;
}

.yellow {
    color: #ffff00;
    font-weight: bold;
}

.green {
    color: #00b800;
}

.red {
    color: #f80000;
}

.line {
    border-bottom: 1px solid #fff;
}

.double {
    border-bottom: 3px double #fff;
}

.cursor {
    position: absolute;
    inset: -2px -1px -1px -2px;
    border: 3px solid #d9d9d9;
}

.cursor::after {
    content: "";
    position: absolute;
    right: -5px;
    bottom: -5px;
    width: 7px;
    height: 7px;
    background-color: #d9d9d9;
    border: 1px solid #262626;
}

/* Scroll bars */
.vscroll {
    width: 20px;
    display: flex;
    flex-direction: column;
    padding-left: 1px;
    background: linear-gradient(90deg, #7b9bcb 80%, #b1c9f0 80%);
}

.split {
    width: 14px;
    height: 8px;
    background-color: #fff;
    border: 1px solid #6a8fbd;
    box-shadow: inset 0 0 0 2px #dbe8f8;
}

.vtrack {
    flex: 1;
    width: 15px;
    padding: 6px 0;
    display: flex;
    flex-direction: column;
    align-items: center;
}

.vthumb {
    width: 14px;
    height: 27%;
    margin: 146px 0 auto;
    display: flex;
    align-items: center;
    justify-content: center;
    background: linear-gradient(90deg, #f4f6fa, #d3dce8 50%, #b3c1d4 80%, #d3dce8);
    border: 1px solid #5a6f94;
    border-radius: 2px;
}

.grip {
    width: 8px;
    height: 7px;
    background: repeating-linear-gradient(#7d8797 0 1px, transparent 1px 2px);
}

.grip.side {
    background: repeating-linear-gradient(90deg, #7d8797 0 1px, transparent 1px 2px);
}

/* Sheet tabs */
.sheet-bar {
    height: 17px;
    display: flex;
    background: linear-gradient(#85a5d6, #a9c0e3);
    border-top: 1px solid #c4daf7;
    border-bottom: 1px solid #4a75b5;
}

.sheet-nav {
    width: 63px;
    padding: 0 2px;
    display: flex;
    align-items: center;
    justify-content: space-around;
    background-color: #c7dcf8;
}

.sheet-nav button {
    display: flex;
}

.sheet-tab {
    width: 80px;
    padding-right: 10px;
    font-size: 12px;
    font-weight: bold;
    line-height: 15px;
    background: linear-gradient(#fff, #e4eefb);
    clip-path: polygon(0 0, 100% 0, 82% 100%, 0 100%);
}

.new-sheet {
    width: 46px;
    margin-left: -14px;
    padding-right: 3px;
    display: flex;
    align-items: center;
    justify-content: center;
    background-color: #cfe0f8;
    clip-path: polygon(30% 0, 100% 0, 70% 100%, 0 100%);
}

.hscroll {
    width: 41%;
    margin-left: auto;
    padding-right: 20px;
    display: flex;
    align-items: center;
    background-color: #7b9bcb;
    max-width: 684px;
}

.hscroll .arrow {
    margin: 0 4px;
}

.hsplit {
    flex: none;
    width: 7px;
    height: 14px;
    background-color: #fff;
    border: 1px solid #6a8fbd;
    box-shadow: inset 0 0 0 1px #dbe8f8;
}

.htrack {
    flex: 1;
    height: 15px;
}

.hthumb {
    width: 91%;
    height: 15px;
    display: flex;
    align-items: center;
    justify-content: center;
    background: linear-gradient(#f4f6fa, #dbe3ee 50%, #b3c1d4 55%, #b8c8da);
    border: 1px solid #5a6f94;
    border-radius: 2px;
}

/* Status bar */
.status {
    height: 22px;
    display: flex;
    color: #17285e;
    background: linear-gradient(#dbe9fb 30%, #b3d0f5 35%, #d3e4fa 90%);
    border-bottom: 1px solid #1d3a63;
}

.ready {
    width: 64px;
    padding-left: 7px;
    line-height: 20px;
    border-right: 1px solid #8fb0dd;
}

.status-right {
    margin-left: auto;
    padding: 0 5px 2px 5px;
    display: flex;
    align-items: center;
    background: linear-gradient(#b7d0f2, #87acdf 60%, #8fb4e8);
    border-left: 1px solid #6d93cb;
}

.views {
    display: flex;
    height: 18px;
    margin-right: 8px;
    border: 1px solid #7ba0d4;
    border-radius: 3px;
    background-color: #b9d1f2;
}

.views button {
    width: 18px;
    display: flex;
    align-items: center;
    justify-content: center;
}

.views .on {
    background: linear-gradient(#f9dcae, #f7b54a 60%, #fcd98c);
}

.status label {
    width: 39px;
}

.round {
    display: flex;
}

#zoom {
    width: 102px;
    height: 16px;
    appearance: none;
    background: linear-gradient(#5b7cb0, #5b7cb0) center / 100% 1px no-repeat;
}

#zoom::-webkit-slider-thumb {
    appearance: none;
    width: 10px;
    height: 14px;
    border: 1px solid #5b7096;
    border-radius: 1px 1px 5px 5px;
    background: linear-gradient(90deg, #e8eef7 40%, #7d92b5 40%, #7d92b5 60%, #e8eef7 60%);
}

/* Taskbar */
.taskbar {
    height: 39px;
    display: flex;
    border-top: 1px solid #7fb4d8;
    background: linear-gradient(225deg, transparent 320px, #9ec8ee 326px, #9ec8ee 331px, transparent 337px) right / 1200px 100% no-repeat, linear-gradient(90deg, #1f6a9c 0, #2380b8 6%, #3d9dd2 15%, #3c9ed6 28%, #2f8acb 45%, #2577c0 60%, #2770b8 70%, #1c5ca6 80%, #1b4f8d 84%, #1a3f6c 88%, #16355f 100%);
}

.task {
    width: 62px;
    display: flex;
    align-items: center;
    justify-content: center;
}

.start {
    width: 54px;
}

.start + .task {
    width: 68px;
}

.task.open {
    width: 54px;
    border: 1px solid #2b5f87;
    border-radius: 3px;
    background: linear-gradient(135deg, #d4e6f2, #6fb2d8);
    box-shadow: inset 0 0 0 1px rgba(255, 255, 255, 0.6);
}

.task.stacked {
    margin-right: 5px;
    box-shadow: inset 0 0 0 1px rgba(255, 255, 255, 0.6), 4px 0 #5fa8d2, 5px 0 #2b5f87;
}

.task.excel {
    width: 59px;
    margin-left: 3px;
    background: linear-gradient(135deg, #f1f7fb, #8dc1de);
}

.tray {
    margin-left: auto;
    display: flex;
    align-items: center;
    color: #fff;
}

.tray-icons {
    display: flex;
    align-items: center;
    gap: 10px;
}

.lang {
    padding-bottom: 5px;
}

.clock {
    width: 66px;
    margin-left: 6px;
    display: flex;
    flex-direction: column;
    align-items: center;
    line-height: 17px;
}

.desktop {
    width: 14px;
    height: 38px;
    border: 1px solid #6c8098;
    background: linear-gradient(135deg, #5a7390, #1d3553);
}
```

FILE: script.js
```js
// Column widths and row heights of the visible part of the sheet
const columns = {
    A: 64, B: 25, C: 123, D: 63, E: 61, F: 26, G: 24, H: 121, I: 65, J: 71, K: 50, L: 115, M: 54,
    N: 72, O: 89, P: 51, Q: 52, R: 64, S: 64, T: 64, U: 64, V: 64, W: 64, X: 64, Y: 64
};

const heights = [
    30, 21, 12, 18, 18, 18, 18, 18, 33, 25, 12, 21, 10, 17, 17, 17, 17, 17, 17, 17, 17, 17, 17, 20, 7,
    20, 16, 16, 16, 11, 9, 21, 17, 10, 9, 17, 17, 17, 17, 17, 17, 17, 17, 17, 17, 17, 17
];
const firstRow = 31;

// cell: [text, classes, colspan]
const cells = {
    B32: ['Statistika:', 'title'],
    C34: ['Odbavených zastávek:', 'end'], D34: ['3 006', 'yellow'],
    C35: ['Prodaných jízdenek:', 'end'], D35: ['1 559', 'yellow'],
    C36: ['Tržby za jízdenky:', 'end'], D36: ['4 397', 'yellow'],
    C37: ['Počet cestujících:', 'end'], D37: ['4 747', 'yellow'],
    C38: ['Počet nehod:', 'end'], D38: ['0', 'yellow'],
    B40: ['Finance:', 'title'],
    B42: ['Zůstatek z minulého období:', 'balance', 3], E42: ['377 754', 'total end', 2], G42: ['DM', 'total'],
    E48: ['4 397', 'green'], E49: ['55 320', 'green'], E50: ['12 705', 'green'], E51: ['1 187', 'green'],
    I44: ['9 740', 'red'], I45: ['5 600', 'red'], I51: ['5 900', 'red'],
    I54: ['1560 (Údržba SOR, O305)', 'red'],
    D56: ['Celkem', ''], E56: ['73 608', 'green'], H56: ['Celkem', 'sum'], I56: ['-21 240', 'red'],
    C58: ['Výsledek za období:', 'end'], D58: ['52 368', 'green indent'],
    C59: ['Daň z příjmu (20%):', 'end'], D59: ['10 473,7', 'red indent'],
    B62: ['Zůstatek do dalšího období:', 'balance', 3], E62: ['419 649', 'total end', 2], G62: ['DM', 'total']
};

const income = ['Dotace na autobusy', 'Úvěry', 'Prodej autobusů', 'Zisk z reklamy', 'Tržby z prodeje lístků',
    'Dotace za zastávky', 'Tržby z lístků mimo bus', 'Zisk z pokut', 'Odměny', 'Další'];
const costs = ['Údržba vozidel', 'Povinné ručení', 'Pojištění', 'Nákup autobusů', 'Lakování', 'Leasing',
    'Splátky úvěrů', 'Mzdy', 'Pokuty', 'Licence', 'Další'];

income.forEach((name, i) => {
    cells['B' + (44 + i)] = ['+', 'mid green'];
    cells['C' + (44 + i)] = [name, ''];
});
costs.forEach((name, i) => {
    cells['G' + (44 + i)] = ['-', 'mid red'];
    cells['H' + (44 + i)] = [name, ''];
});

'BCDEFGHI'.split('').forEach(col => {
    cells[col + 55] = ['', 'line'];
    cells[col + 60] = ['', 'double'];
});

const names = Object.keys(columns);
let html = '<colgroup><col style="width:26px">';
names.forEach(n => html += `<col style="width:${columns[n]}px">`);
html += '</colgroup><thead><tr><th class="corner"></th>';
names.forEach(n => html += `<th class="${n === 'I' ? 'current' : ''}">${n}</th>`);
html += '</tr></thead><tbody>';

heights.forEach((h, i) => {
    const no = firstRow + i;
    html += `<tr><th class="row-no ${no === 52 ? 'current' : ''}"><div class="cell" style="height:${h}px">${no}</div></th>`;
    for (let c = 0; c < names.length; c++) {
        const [text, cls, span] = cells[names[c] + no] || ['', '', 1];
        const cursor = names[c] + no === 'I52' ? '<i class="cursor"></i>' : '';
        html += `<td colspan="${span || 1}">`;
        html += text || cls ? `<div class="cell ${cls}" style="height:${h}px">${text}</div>` : cursor;
        html += '</td>';
        c += (span || 1) - 1;
    }
    html += '</tr>';
});

document.getElementById('grid').innerHTML = html + '</tbody>';
```
